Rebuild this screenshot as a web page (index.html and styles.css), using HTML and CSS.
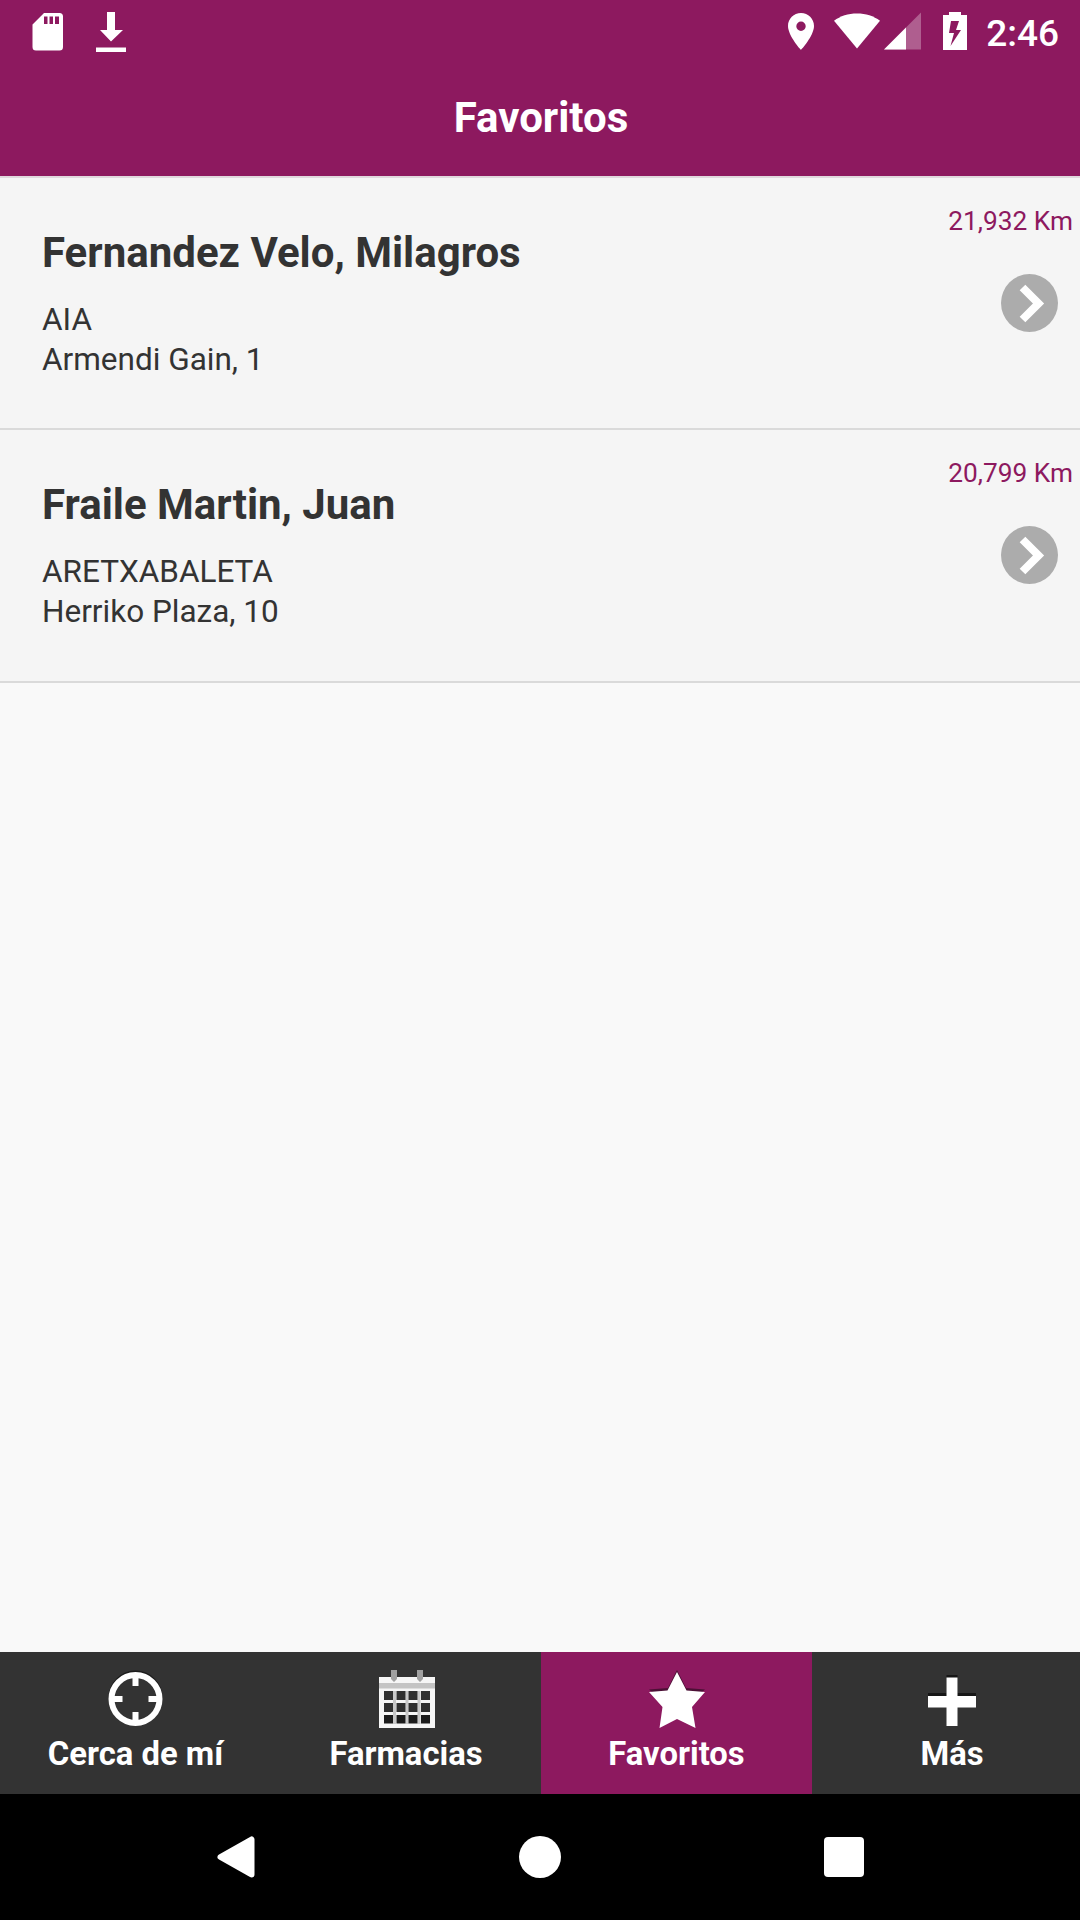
FILE: index.html
```html
<!DOCTYPE html>
<html lang="es">
<head>
    <meta charset="UTF-8">
    <meta name="viewport" content="width=device-width, initial-scale=1.0">
    <title>Favoritos</title>
    <link rel="stylesheet" href="styles.css">
</head>
<body>
    <div class="header">
        <div class="statusbar">
            <div class="status-left">
                <svg width="32" height="40" viewBox="0 0 32 40">
                    <path fill="#fff" fill-rule="evenodd" d="M12 1H27.500a3.500 3.500 0 0 1 3.500 3.500V35a3.500 3.500 0 0 1-3.500 3.500H4A3.500 3.500 0 0 1 .5 35V12.500zM12 4.500V12h3.500V4.500zM17.500 4.500V12H21V4.500zM23 4.500V12h4V4.500z"/>
                </svg>
                <svg width="30" height="40" viewBox="0 0 30 40">
                    <path fill="#fff" d="M11 0h8v18h8L15 29.500 4 18h7zM0 35.500h30V40H0z"/>
                </svg>
            </div>
            <div class="status-right">
                <svg class="pin" width="26" height="38" viewBox="0 0 26 38">
                    <path fill="#fff" fill-rule="evenodd" d="M13 1C5.800 1 0 6.800 0 14c0 9.800 13 24 13 24s13-14.200 13-24C26 6.800 20.200 1 13 1zM13 9.500a4.700 4.700 0 1 1 0 9.400 4.700 4.700 0 0 1 0-9.400z"/>
                </svg>
                <svg class="wifi" width="46" height="38" viewBox="0 0 47 38">
                    <path fill="#fff" d="M0 8.500C6.500 3.500 14.500 1 23.500 1S40.500 3.500 47 8.500L23.500 37z"/>
                </svg>
                <svg class="signal" width="37" height="38" viewBox="0 0 37 38">
                    <path fill="#fff" fill-opacity=".3" d="M37 .5V37.500H0z"/>
                    <path fill="#fff" d="M22 15.500v22H0z"/>
                </svg>
                <svg class="battery" width="24" height="38" viewBox="0 0 24 38">
                    <path fill="#fff" fill-rule="evenodd" d="M6 0h12v3h6v35H0V3h6zM8 9L6 21h5L7.500 34 18 18h-5l3-9z"/>
                </svg>
                <span class="time">2:46</span>
            </div>
        </div>
        <h1>Favoritos</h1>
    </div>
    <div class="list">
        <div class="item">
            <div class="info">
                <h2>Fernandez Velo, Milagros</h2>
                <p>AIA</p>
                <p>Armendi Gain, 1</p>
            </div>
            <div class="side">
                <span class="distance">21,932 Km</span>
                <svg width="57" height="58" viewBox="0 0 57 58">
                    <ellipse cx="28.500" cy="29" rx="28.500" ry="29" fill="#acacac"/>
                    <path fill="none" stroke="#fff" stroke-width="8" d="M21.500 13.500L37.500 29.500 21.500 45.500"/>
                </svg>
            </div>
        </div>
        <div class="item">
            <div class="info">
                <h2>Fraile Martin, Juan</h2>
                <p>ARETXABALETA</p>
                <p>Herriko Plaza, 10</p>
            </div>
            <div class="side">
                <span class="distance">20,799 Km</span>
                <svg width="57" height="58" viewBox="0 0 57 58">
                    <ellipse cx="28.500" cy="29" rx="28.500" ry="29" fill="#acacac"/>
                    <path fill="none" stroke="#fff" stroke-width="8" d="M21.500 13.500L37.500 29.500 21.500 45.500"/>
                </svg>
            </div>
        </div>
    </div>
    <div class="tabs">
        <div class="tab">
            <svg width="56" height="58" viewBox="0 0 56 58">
                <circle cx="27.500" cy="27.500" r="24.500" fill="none" stroke="#1c1c1c" stroke-width="5"/>
                <circle cx="27.500" cy="29" r="24" fill="none" stroke="#fff" stroke-width="6"/>
                <path stroke="#fff" stroke-width="6" d="M27.500 4v12M27.500 42v12M2.500 29h12M40.500 29h12"/>
            </svg>
            <span>Cerca de mí</span>
        </div>
        <div class="tab">
            <svg class="calendar" width="56" height="58" viewBox="0 0 56 58">
                <path fill="#f6f6f6" d="M0 7h56v51H0z"/>
                <path fill="#c4c4c4" d="M0 13h56v5.500H0z"/>
                <path fill="#a0a0a0" d="M12 0h6v9l-3 3-3-3zM38 0h6v9l-3 3-3-3z"/>
                <path fill="#c8c8c8" d="M14 21h3v33h-3zM26.500 21h3v33h-3zM38.500 21h3v33h-3z"/>
                <path fill="#303030" d="M5 21h9v9H5zM17.500 21h9v9h-9zM29.500 21h9v9h-9zM42 21h9v9h-9zM5 33h9v9H5zM17.500 33h9v9h-9zM29.500 33h9v9h-9zM42 33h9v9h-9z"/>
                <path fill="#1c1c1c" d="M5 45h9v8.500H5zM17.500 45h9v8.500h-9zM29.500 45h9v8.500h-9zM42 45h9v8.500h-9z"/>
            </svg>
            <span>Farmacias</span>
        </div>
        <div class="tab active">
            <svg width="56" height="58" viewBox="0 0 56 58">
                <path fill="#4c1036" d="M28 0l9 18 19 1.500-14 12H14L0 19.500 19 18z"/>
                <path fill="#fff" d="M28 2l9.500 18.500L56 22 43 37l3.500 21L28 49 10.500 58 13.500 37 0 22l18.500-1.500z"/>
            </svg>
            <span>Favoritos</span>
        </div>
        <div class="tab last">
            <svg width="56" height="58" viewBox="0 0 56 58">
                <path fill="#161616" d="M22.500 5h11v18h18.500v5H4v-5h18.500z"/>
                <path fill="#fff" d="M22.500 7.500h11V26H52v11.500H33.500V56h-11V37.500H4V26h18.500z"/>
            </svg>
            <span>Más</span>
        </div>
    </div>
    <div class="navbar">
        <svg width="38" height="42" viewBox="0 0 38 42">
            <path fill="#fff" stroke="#fff" stroke-width="6" stroke-linejoin="round" d="M34.500 3.500v35L3.500 21z"/>
        </svg>
        <div class="home"></div>
        <div class="recent"></div>
    </div>
</body>
</html>
```
FILE: styles.css
```css
body{
    margin: 0px;
    padding: 0px;
    height: 1920px;
    background-color: #f9f9f9;
    font-family: Roboto, sans-serif;
    color: #333;
    display: flex;
    flex-direction: column;
}
h1, h2, p{
    margin: 0px;
}
svg{
    display: block;
    flex: none;
}

.header{
    height: 176px;
    background-color: #8d195f;
    border-bottom: 2px solid #e0d8dd;
    color: #fff;
}
.statusbar{
    height: 72px;
    padding: 12px 21px 0px 32px;
    box-sizing: border-box;
    display: flex;
    justify-content: space-between;
}
.status-left{
    display: flex;
    gap: 32px;
}
.status-right{
    display: flex;
}
.wifi{
    margin-left: 20px;
}
.signal{
    margin-left: 4px;
}
.battery{
    margin-left: 22px;
}
.time{
    margin-left: 19px;
    font-size: 37px;
    font-weight: 500;
    line-height: 44px;
}
.header h1{
    padding-left: 2px;
    font-size: 42px;
    line-height: 92px;
    text-align: center;
}

.list{
    flex: 1;
}
.item{
    height: 250px;
    display: flex;
    justify-content: space-between;
    background-color: #f5f5f5;
    border-bottom: 2px solid #dadada;
}
.item:last-child{
    height: 251px;
}
.info{
    padding: 50px 0px 0px 42px;
}
.info h2{
    font-size: 42px;
    line-height: 50px;
    margin-bottom: 22px;
}
.info p{
    font-size: 31.5px;
    line-height: 40px;
}
.side{
    padding: 27px 7px 0px 0px;
    display: flex;
    flex-direction: column;
    align-items: flex-end;
}
.side svg{
    margin: 36px 15px 0px 0px;
}
.distance{
    color: #8d195f;
    font-size: 26.25px;
    line-height: 33px;
}

.tabs{
    height: 142px;
    background-color: #333;
    display: grid;
    grid-template-columns: 271px 270px 271px 268px;
}
.tab{
    padding-top: 18px;
    display: flex;
    flex-direction: column;
    align-items: center;
    color: #fff;
    font-size: 32.8px;
    font-weight: bold;
    line-height: 40px;
}
.tab span{
    margin-top: 6px;
}
.calendar{
    margin-left: 2px;
}
.active{
    background-color: #8d195f;
}
.last{
    padding-left: 12px;
}

.navbar{
    height: 126px;
    padding: 0px 216px 0px 217px;
    background-color: #000;
    display: flex;
    justify-content: space-between;
    align-items: center;
}
.home{
    width: 42px;
    height: 42px;
    border-radius: 50%;
    background-color: #fff;
}
.recent{
    width: 40px;
    height: 40px;
    border-radius: 4px;
    background-color: #fff;
}
```
